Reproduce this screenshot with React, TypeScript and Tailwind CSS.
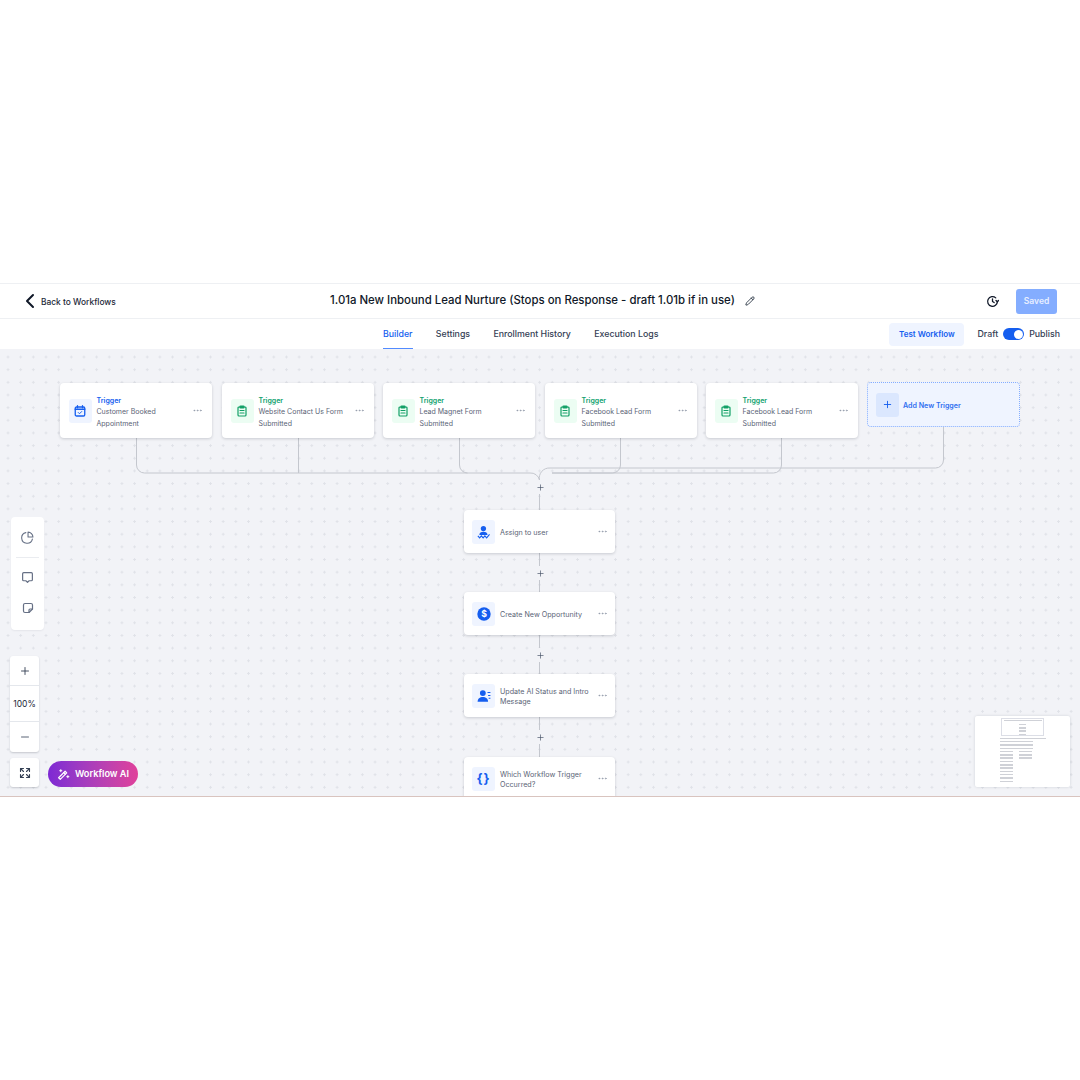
import { ChevronLeft, Pencil, Plus, Minus, Ellipsis } from 'lucide-react';
import type { ReactNode } from 'react';

const font = "font-['Inter','Liberation_Sans',sans-serif]";

function CalendarCheckIcon() {
  return (
    <svg width="12" height="12" viewBox="0 0 24 24" fill="none" stroke="#155eef" strokeWidth="2.6" strokeLinecap="round" strokeLinejoin="round">
      <path d="M7 1.5v4M17 1.5v4" />
      <rect x="2.5" y="4" width="19" height="18" rx="2.5" />
      <path d="M2.5 8.5h19" strokeWidth="3" />
      <path d="m8.5 15 2.5 2.5 4.5-4.5" strokeWidth="2" />
    </svg>
  );
}

function ClipboardIcon() {
  return (
    <svg width="12" height="12" viewBox="0 0 24 24" fill="none" stroke="#12a067" strokeWidth="2.4" strokeLinecap="round" strokeLinejoin="round">
      <path d="M8 4H6a2 2 0 0 0-2 2v14a2 2 0 0 0 2 2h12a2 2 0 0 0 2-2V6a2 2 0 0 0-2-2h-2" />
      <rect x="8" y="2" width="8" height="4" rx="1" fill="#12a067" />
      <path d="M8 11h8M8 16h8" />
    </svg>
  );
}

function AssignIcon() {
  return (
    <svg width="14" height="14" viewBox="0 0 24 24" fill="#155eef">
      <circle cx="11" cy="6" r="4.5" />
      <path d="M4 17c0-3.500 3-5.500 7-5.500s7 2 7 5.500z" />
      <path d="m1.500 18.500 3 3.500 3-3.500 3 3.500 3-3.500 3 3.500 5-6" fill="none" stroke="#155eef" strokeWidth="1.9" />
    </svg>
  );
}

function DollarIcon() {
  return (
    <svg width="14" height="14" viewBox="0 0 24 24">
      <circle cx="12" cy="12" r="11.5" fill="#155eef" />
      <text x="12" y="17.5" textAnchor="middle" fontSize="15" fontWeight="700" fill="#fff" fontFamily="Inter, sans-serif">$</text>
    </svg>
  );
}

function UserLinesIcon() {
  return (
    <svg width="14" height="14" viewBox="0 0 24 24" fill="#155eef">
      <circle cx="10" cy="7" r="5" />
      <path d="M1 22c0-6 4-8.500 9-8.500s9 2.500 9 8.500z" />
      <path d="M18 6h5M19 11h4M20 16h3" fill="none" stroke="#155eef" strokeWidth="1.8" />
    </svg>
  );
}

function BracesIcon() {
  return <span className="text-[13px] font-bold leading-none tracking-[1px] text-[#155eef]">{'{}'}</span>;
}

function MagicIcon() {
  return (
    <svg width="13" height="13" viewBox="0 0 24 24" fill="none" stroke="#fff" strokeWidth="2.2" strokeLinecap="round" strokeLinejoin="round">
      <path d="m3 18 12-12 3 3L6 21z" />
      <path d="m12.500 8.500 3 3" />
      <path d="M7 3v4M5 5h4M20 14v4M18 16h4" strokeWidth="1.8" />
    </svg>
  );
}

function HistoryIcon() {
  return (
    <svg width="13" height="13" viewBox="0 0 24 24" fill="none" stroke="#101828" strokeWidth="2.4" strokeLinecap="round" strokeLinejoin="round">
      <path d="M21 12a9 9 0 1 1-3-6.700" />
      <path d="M12 7v5l3 2" />
      <path d="m23.500 10-2.500 2.500-2.500-2.500" />
    </svg>
  );
}

function PieIcon() {
  return (
    <svg width="13" height="13" viewBox="0 0 24 24" fill="none" stroke="#667085" strokeWidth="2" strokeLinecap="round" strokeLinejoin="round">
      <path d="M21 15a10 10 0 1 1-12-12" />
      <path d="M13 2a9 9 0 0 1 9 9h-9z" />
    </svg>
  );
}

function CommentIcon() {
  return (
    <svg width="13" height="13" viewBox="0 0 24 24" fill="none" stroke="#667085" strokeWidth="2.2" strokeLinecap="round" strokeLinejoin="round">
      <path d="M5 3h14a2 2 0 0 1 2 2v11a2 2 0 0 1-2 2h-4l-3 3-3-3H5a2 2 0 0 1-2-2V5a2 2 0 0 1 2-2z" />
    </svg>
  );
}

function NoteIcon() {
  return (
    <svg width="12" height="12" viewBox="0 0 24 24" fill="none" stroke="#667085" strokeWidth="2.4" strokeLinecap="round" strokeLinejoin="round">
      <path d="M14 21H6a3 3 0 0 1-3-3V6a3 3 0 0 1 3-3h12a3 3 0 0 1 3 3v8z" />
      <path d="M14 21v-5a2 2 0 0 1 2-2h5" />
    </svg>
  );
}

function FitIcon() {
  return (
    <svg width="12" height="12" viewBox="0 0 24 24" fill="none" stroke="#344054" strokeWidth="2.2" strokeLinecap="round" strokeLinejoin="round">
      <path d="M3 9V3h6M3 3l6 6M21 9V3h-6M21 3l-6 6M3 15v6h6M3 21l6-6M21 15v6h-6M21 21l-6-6" />
    </svg>
  );
}

function Dots() {
  return <Ellipsis size={11} className="shrink-0 text-[#8a93a3]" strokeWidth={1.5} />;
}

type TriggerProps = { left: string; color: 'blue' | 'green'; text: ReactNode };

function TriggerCard({ left, color, text }: TriggerProps) {
  const blue = color === 'blue';
  return (
    <div className={`absolute top-[34px] flex h-[55px] w-[152px] items-center rounded-[4px] bg-white pl-[8.500px] pr-[9px] shadow-[0_1px_3px_rgba(16,24,40,0.18)] ${left}`}>
      <div className={`flex h-6 w-[23px] shrink-0 items-center justify-center rounded-[3px] ${blue ? 'bg-[#eff4ff]' : 'bg-[#ecfdf3]'}`}>
        {blue ? <CalendarCheckIcon /> : <ClipboardIcon />}
      </div>
      <div className="ml-[5px] mt-[4px] flex-1">
        <div className={`text-[7px] font-semibold leading-[11px] ${blue ? 'text-[#155eef]' : 'text-[#0f9f6e]'}`}>Trigger</div>
        <div className="mt-[0.5px] text-[7px] leading-[12px] text-[#5b6476]">{text}</div>
      </div>
      <Dots />
    </div>
  );
}

type ActionProps = { top: string; icon: ReactNode; text: ReactNode };

function ActionCard({ top, icon, text }: ActionProps) {
  return (
    <div className={`absolute left-[464px] flex h-[43px] w-[151px] items-center rounded-[4px] bg-white pl-2 pr-[7px] shadow-[0_1px_3px_rgba(16,24,40,0.18)] ${top}`}>
      <div className="flex h-6 w-[23px] shrink-0 items-center justify-center rounded-[3px] bg-[#eff4ff]">{icon}</div>
      <div className="ml-[5px] mt-[2px] flex-1 text-[7.150px] leading-[10px] text-[#5b6476]">{text}</div>
      <Dots />
    </div>
  );
}

function PlusMark({ top }: { top: string }) {
  return (
    <div className={`absolute left-[533px] flex h-[14px] w-[14px] items-center justify-center bg-[#f2f3f7] ${top}`}>
      <Plus size={9} strokeWidth={1.8} className="text-[#475467]" />
    </div>
  );
}

function Connectors() {
  return (
    <svg className="absolute left-0 top-0" width="1080" height="447" viewBox="0 0 1080 447" fill="none" stroke="#c4c7ce" strokeWidth="1">
      <path d="M136.500 89v27a8 8 0 0 0 8 8H530a9 9 0 0 1 9.500 7" />
      <path d="M298.500 89v35" />
      <path d="M459.500 89v27a8 8 0 0 0 8 8" />
      <path d="M620.500 89v27a8 8 0 0 1-8 8H552" />
      <path d="M781.500 89v27a8 8 0 0 1-8 8H552" />
      <path d="M943.500 78v33a8 8 0 0 1-8 8H550a10 10 0 0 0-10.500 12" />
      <path d="M539.500 131v30M539.500 204v41M539.500 286v41M539.500 368v41" />
    </svg>
  );
}

// one grey row of the minimap
function MiniRow({ widths }: { widths: string[] }) {
  return (
    <div className="flex h-[1.500px] gap-[6px]">
      {widths.map((w, i) => (
        <div key={i} className={`h-full bg-[#cfd1d7] ${w}`} />
      ))}
    </div>
  );
}

export default function App() {
  const tabs = ['Settings', 'Enrollment History', 'Execution Logs'];
  return (
    <div className={`flex h-[1080px] w-[1080px] flex-col overflow-hidden bg-white ${font}`}>
      <div className="h-[283px] shrink-0" />

      {/* Header */}
      <header className="relative flex h-[36px] shrink-0 items-center border-y border-[#eef0f3] pl-[18px] pr-[23px]">
        <ChevronLeft size={24} strokeWidth={2} className="text-[#101828]" />
        <span className="-ml-[1px] mt-[2px] text-[8.400px] font-medium text-[#1d2939]">Back to Workflows</span>
        <div className="absolute left-[330px] top-0 flex h-full items-center">
          <span className="text-[11.400px] font-medium leading-none text-[#101828]">1.01a New Inbound Lead Nurture (Stops on Response - draft 1.01b if in use)</span>
          <Pencil size={10} strokeWidth={2} className="ml-[10px] text-[#1d2939]" />
        </div>
        <div className="ml-auto flex items-center">
          <HistoryIcon />
          <div className="ml-[17px] flex h-[25px] w-[41px] items-center justify-center rounded-[3px] bg-[#84adff] text-[8.500px] font-semibold text-[#e8efff]">Saved</div>
        </div>
      </header>

      {/* Tabs */}
      <nav className="relative flex h-[30px] shrink-0 items-center">
        <div className="absolute left-[383px] top-0 flex h-full items-center text-[8.800px] font-medium">
          <span className="flex h-full items-center border-b border-[#528bff] text-[#155eef]">Builder</span>
          {tabs.map((tab) => (
            <span key={tab} className="ml-[23.300px] text-[#344054]">{tab}</span>
          ))}
        </div>
        <div className="ml-auto flex items-center pr-[20px]">
          <div className="flex h-[23px] w-[75px] items-center justify-center rounded-[4px] bg-[#eff4ff] text-[8px] font-semibold text-[#155eef]">Test Workflow</div>
          <span className="ml-[13px] text-[8.800px] font-medium text-[#344054]">Draft</span>
          <div className="ml-[5px] flex h-[12px] w-[21px] items-center justify-end rounded-full bg-[#155eef] pr-[1px]">
            <div className="h-[9px] w-[9px] rounded-full bg-white" />
          </div>
          <span className="ml-[5px] text-[8.800px] font-medium text-[#344054]">Publish</span>
        </div>
      </nav>

      {/* Canvas */}
      <main className="relative h-[447px] shrink-0 overflow-hidden bg-[#f2f3f7] bg-[radial-gradient(circle,#e0e2e8_1px,transparent_1.200px)] bg-[length:12.670px_12.670px] bg-[position:1.700px_1.700px]">
        <Connectors />

        <TriggerCard left="left-[60px]" color="blue" text={<>Customer Booked<br />Appointment</>} />
        <TriggerCard left="left-[222px]" color="green" text={<>Website Contact Us Form<br />Submitted</>} />
        <TriggerCard left="left-[383px]" color="green" text={<>Lead Magnet Form<br />Submitted</>} />
        <TriggerCard left="left-[545px]" color="green" text={<>Facebook Lead Form<br />Submitted</>} />
        <TriggerCard left="left-[706px]" color="green" text={<>Facebook Lead Form<br />Submitted</>} />

        <div className="absolute left-[867px] top-[33px] flex h-[45px] w-[153px] items-center rounded-[4px] border border-dotted border-[#84adff] bg-[#eff4ff] pl-2">
          <div className="flex h-6 w-[23px] items-center justify-center rounded-[3px] bg-[#dbe7fe]">
            <Plus size={11} strokeWidth={2} className="text-[#155eef]" />
          </div>
          <span className="ml-[4px] mt-[3px] text-[7.100px] font-semibold text-[#2f6ff0]">Add New Trigger</span>
        </div>

        <PlusMark top="top-[131px]" />
        <PlusMark top="top-[217px]" />
        <PlusMark top="top-[299px]" />
        <PlusMark top="top-[381px]" />

        <ActionCard top="top-[161px]" icon={<AssignIcon />} text="Assign to user" />
        <ActionCard top="top-[243px]" icon={<DollarIcon />} text="Create New Opportunity" />
        <ActionCard top="top-[325px]" icon={<UserLinesIcon />} text={<>Update AI Status and Intro<br />Message</>} />
        <ActionCard top="top-[408px]" icon={<BracesIcon />} text={<>Which Workflow Trigger<br />Occurred?</>} />

        {/* Left tools */}
        <div className="absolute left-[11px] top-[168px] flex h-[113px] w-[33px] flex-col items-center rounded-[4px] bg-white pt-[14px] shadow-[0_1px_2px_rgba(16,24,40,0.06)]">
          <PieIcon />
          <div className="mt-[13px] h-px w-[23px] bg-[#eaecf0]" />
          <div className="mt-[13px]"><CommentIcon /></div>
          <div className="mt-[18px]"><NoteIcon /></div>
        </div>

        {/* Zoom controls */}
        <div className="absolute left-[10px] top-[307px] flex h-[96px] w-[29px] flex-col rounded-[3px] bg-white text-[#344054] shadow-[0_1px_2px_rgba(16,24,40,0.2)]">
          <div className="flex h-[30px] items-center justify-center border-b border-[#e4e7ec]"><Plus size={12} strokeWidth={1.8} /></div>
          <div className="flex h-[36px] items-center justify-center border-b border-[#e4e7ec] pt-[2px] text-[8.500px] text-[#1d2939]">100%</div>
          <div className="flex flex-1 items-center justify-center"><Minus size={12} strokeWidth={1.8} className="text-[#475467]" /></div>
        </div>
        <div className="absolute left-[10px] top-[409px] flex h-[29px] w-[29px] items-center justify-center rounded-[3px] bg-white shadow-[0_1px_2px_rgba(16,24,40,0.2)]">
          <FitIcon />
        </div>

        <div className="absolute left-[48px] top-[412px] flex h-[26px] w-[90px] items-center justify-center gap-[5px] rounded-full bg-gradient-to-r from-[#7e28d4] to-[#e0409a] text-[9.200px] font-semibold text-white">
          <MagicIcon />
          <span>Workflow AI</span>
        </div>

        {/* Minimap */}
        <div className="absolute left-[975px] top-[367px] h-[71px] w-[95px] rounded-[2px] bg-white shadow-[0_0_3px_rgba(16,24,40,0.15)]">
          <div className="h-full overflow-hidden pl-[25px] pt-[3.500px] blur-[0.4px]">
            <div className="ml-[4px] flex flex-col gap-[1.800px]">
              <MiniRow widths={['w-[38px]']} />
              <div className="ml-[15px] mt-[1px] flex flex-col gap-[1.800px]">
                {[0, 1, 2, 3].map((i) => (
                  <MiniRow key={i} widths={['w-[7px]']} />
                ))}
              </div>
            </div>
            <div className="mt-[2.500px] flex flex-col gap-[1.800px]">
              <MiniRow widths={['w-[46px]']} />
              {[0, 1, 2].map((i) => (
                <MiniRow key={i} widths={['w-[33px]']} />
              ))}
              {[0, 1, 2].map((i) => (
                <MiniRow key={i} widths={['w-[13px]', 'w-[13px]']} />
              ))}
              {[0, 1, 2, 3, 4, 5, 6].map((i) => (
                <MiniRow key={i} widths={['w-[13px]']} />
              ))}
            </div>
          </div>
          <div className="absolute left-[26px] top-[2px] h-[18px] w-[43px] border border-[#dcdee6]" />
        </div>
      </main>

      <div className="h-px shrink-0 bg-[#d9c4bf]" />
    </div>
  );
}
